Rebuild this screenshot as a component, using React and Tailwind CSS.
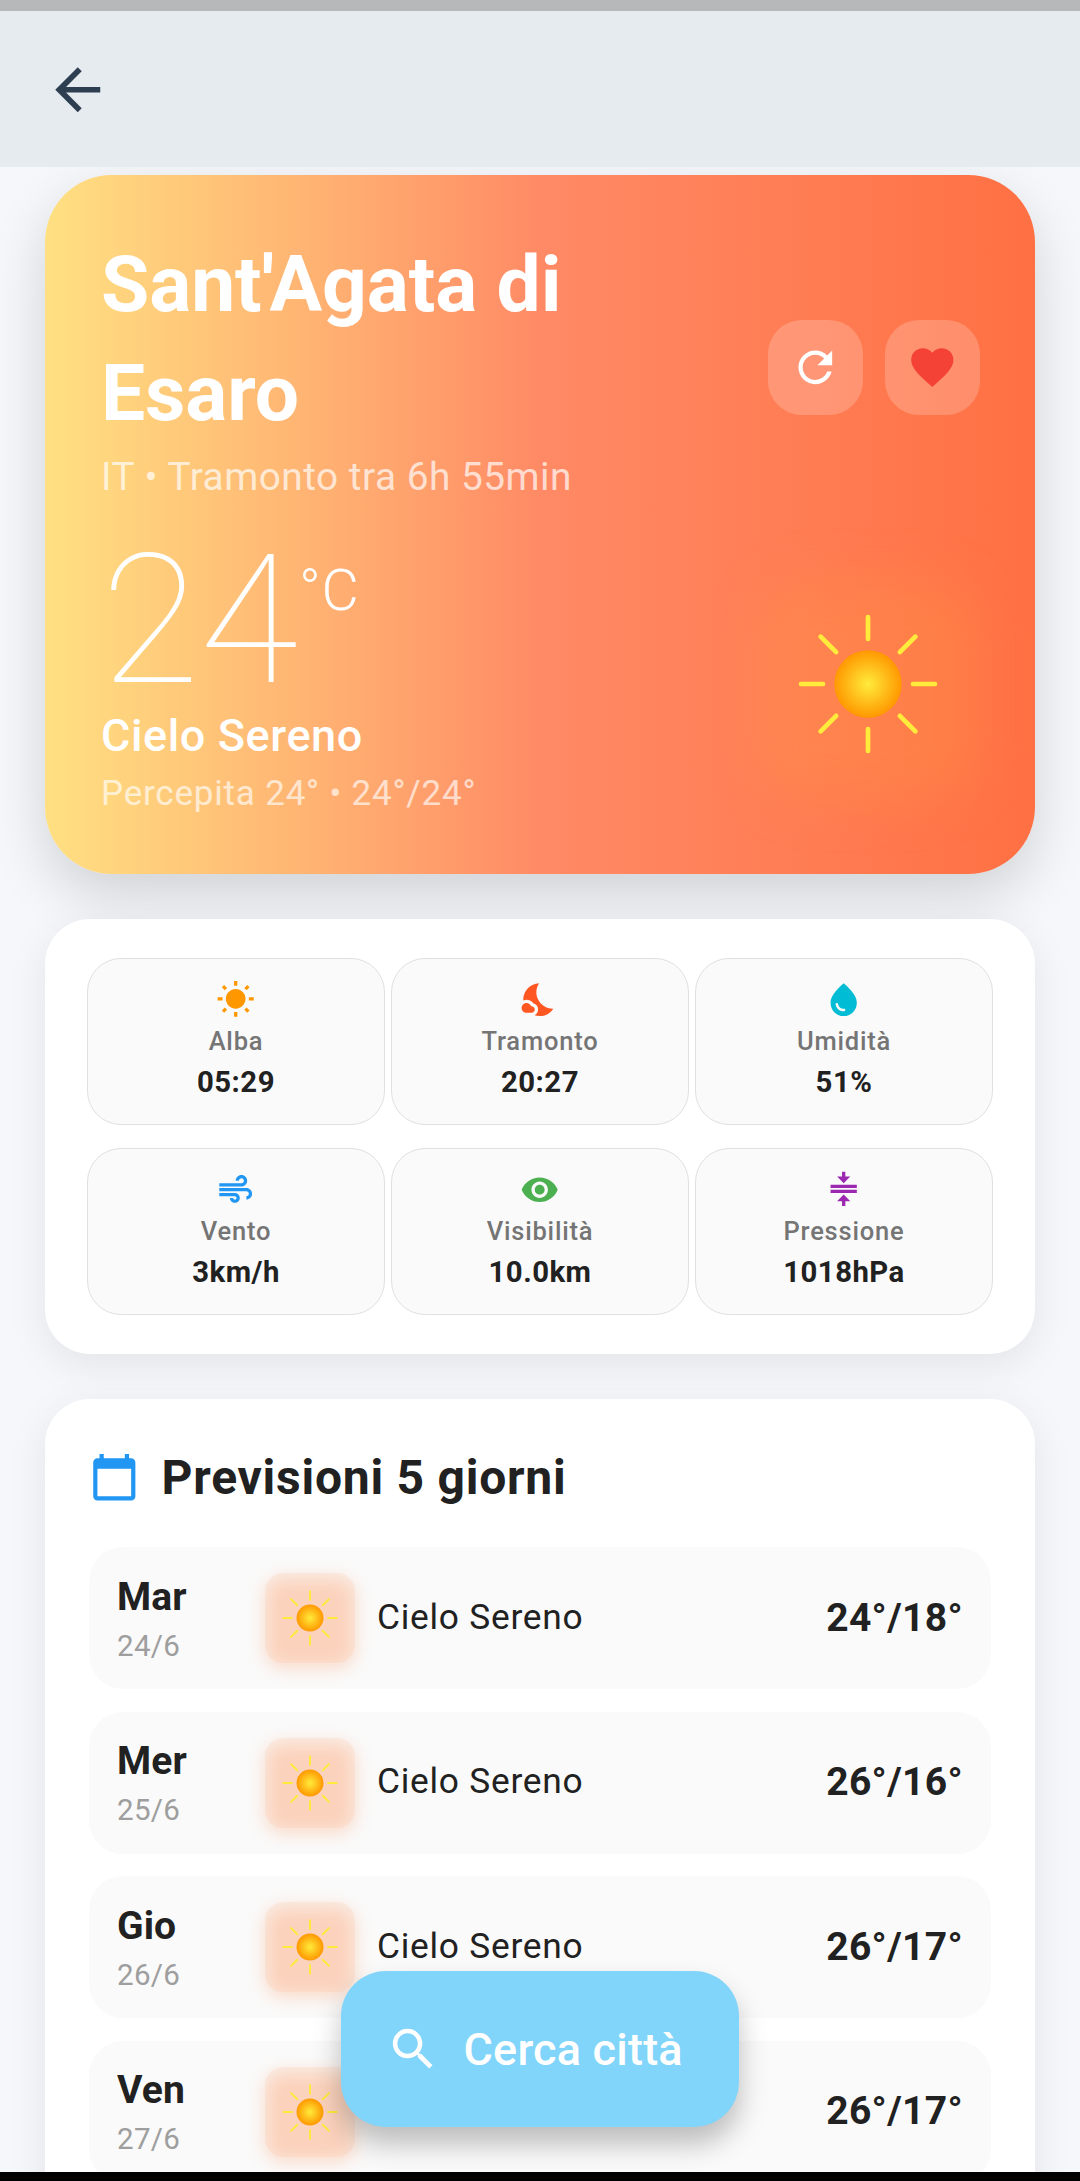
import { MdArrowBack, MdRefresh, MdFavorite, MdWbSunny, MdNightsStay, MdWaterDrop, MdAir, MdVisibility, MdCompress, MdCalendarToday, MdSearch } from "react-icons/md";

const RAYS = [0, 45, 90, 135, 180, 225, 270, 315];

function Sun({ className, id }) {
  return (
    <svg viewBox="-75 -75 150 150" className={className}>
      <defs>
        <radialGradient id={id}>
          <stop offset="0" stopColor="#FFEB3B" />
          <stop offset="1" stopColor="#FF9800" />
        </radialGradient>
      </defs>
      {RAYS.map((a) => (
        <line key={a} x1="45" y1="0" x2="67" y2="0" stroke="#FFEB3B" strokeWidth="4.7" strokeLinecap="round" transform={`rotate(${a})`} />
      ))}
      <circle r="33.7" fill={`url(#${id})`} />
    </svg>
  );
}

const STATS = [
  { icon: MdWbSunny, color: "text-[#FF9800]", label: "Alba", value: "05:29" },
  { icon: MdNightsStay, color: "text-[#FF5722]", label: "Tramonto", value: "20:27" },
  { icon: MdWaterDrop, color: "text-[#00BCD4]", label: "Umidità", value: "51%" },
  { icon: MdAir, color: "text-[#2196F3]", label: "Vento", value: "3km/h" },
  { icon: MdVisibility, color: "text-[#4CAF50]", label: "Visibilità", value: "10.0km" },
  { icon: MdCompress, color: "text-[#9C27B0]", label: "Pressione", value: "1018hPa" },
];

const DAYS = [
  { day: "Mar", date: "24/6", temp: "24°/18°" },
  { day: "Mer", date: "25/6", temp: "26°/16°" },
  { day: "Gio", date: "26/6", temp: "26°/17°" },
  { day: "Ven", date: "27/6", temp: "26°/17°" },
];

function Hero() {
  return (
    <section className="flex h-[699px] shrink-0 flex-col rounded-[67px] bg-linear-to-r from-[#FFE082] via-[#FF8A65] to-[#FF7043] pt-[55px] pr-[55px] pl-[56px] text-white shadow-[0_22px_56px_rgba(0,0,0,0.15)]">
      <div className="flex items-center justify-between">
        <div>
          <h1 className="w-[560px] text-[78.5px] leading-[109px] font-bold tracking-[-0.1px]">Sant'Agata di<br />Esaro</h1>
          <p className="text-[38.8px] leading-[57px] tracking-[0.5px] text-white/70">IT • Tramonto tra 6h 55min</p>
        </div>
        <div className="flex gap-[22px]">
          <button className="grid size-[95px] place-items-center rounded-[34px] bg-white/20"><MdRefresh className="size-[50.6px]" /></button>
          <button className="grid size-[95px] place-items-center rounded-[34px] bg-white/20"><MdFavorite className="size-[50.6px] text-[#F44336]" /></button>
        </div>
      </div>
      <div className="mt-[29px] flex items-center justify-between">
        <div>
          <div className="flex items-start">
            <span className="text-[180px] leading-[174px] font-thin">24</span>
            <span className="mt-[24px] ml-px text-[57.5px] leading-[66px] font-light tracking-[0.6px]">°C</span>
          </div>
          <p className="text-[45px] leading-[56px] font-medium tracking-[0.6px]">Cielo Sereno</p>
          <p className="mt-[5px] text-[35px] leading-[49px] tracking-[0.8px] text-white/65">Percepita 24° • 24°/24°</p>
        </div>
        <div className="relative mt-[16px] grid size-[225px] place-items-center">
          <div className="absolute inset-0 translate-y-[6px] rounded-[56px] bg-[#FFA040]/22 blur-[24px]" />
          <Sun id="sun-hero" className="relative size-[150px]" />
        </div>
      </div>
    </section>
  );
}

export default function App() {
  return (
    <div className="relative flex h-[2181px] w-[1080px] flex-col overflow-hidden bg-[#F5F7FB] font-['Roboto',sans-serif] text-[#212121]">
      <div className="h-[11px] shrink-0 bg-[#B7B8BA]" />
      <header className="flex h-[156px] shrink-0 items-center bg-[#E6EBEF] pt-[1px] pl-[44px]">
        <MdArrowBack className="size-[67.5px] text-[#2C3E50]" />
      </header>
      <main className="flex flex-1 flex-col overflow-hidden px-[45px] pt-[8px]">
        <Hero />
        <section className="mt-[45px] grid h-[435px] shrink-0 grid-cols-3 gap-x-[6px] gap-y-[23px] rounded-[45px] bg-white px-[42px] py-[39px] shadow-[0_11px_42px_rgba(0,0,0,0.08)]">
          {STATS.map(({ icon: Icon, color, label, value }) => (
            <div key={label} className="flex flex-col items-center rounded-[34px] border border-[#E0E0E0] bg-[#FAFAFA] pt-[20.5px]">
              <Icon className={`size-[39.4px] ${color}`} />
              <span className="mt-[4.5px] text-[25.5px] leading-[36px] font-medium tracking-[0.8px] text-[#757575]">{label}</span>
              <span className="mt-[3px] text-[29.3px] leading-[40px] font-bold tracking-[0.5px]">{value}</span>
            </div>
          ))}
        </section>
        <section className="mt-[45px] flex h-[900px] shrink-0 flex-col rounded-[45px] bg-white px-[44px] pt-[45px] shadow-[0_11px_42px_rgba(0,0,0,0.08)]">
          <div className="flex h-[67px] items-center">
            <MdCalendarToday className="size-[50.6px] text-[#2196F3]" />
            <h2 className="ml-[22px] text-[48px] leading-[66px] font-bold tracking-[0.75px]">Previsioni 5 giorni</h2>
          </div>
          <ul className="mt-[36px] flex flex-col gap-[22.5px]">
            {DAYS.map(({ day, date, temp }) => (
              <li key={day} className="flex h-[142px] shrink-0 items-center rounded-[34px] bg-[#FAFAFA] px-[28px]">
                <div className="w-[148px] pt-[1px]">
                  <p className="text-[39px] leading-[55px] font-bold tracking-[0.1px]">{day}</p>
                  <p className="text-[29.5px] leading-[43px] tracking-[0.3px] text-[#9E9E9E]">{date}</p>
                </div>
                <div className="relative grid size-[90px] place-items-center">
                  <div className="absolute inset-0 translate-y-[5px] rounded-[18px] bg-[#FF8040]/27 blur-[9px]" />
                  <div className="absolute inset-0 rounded-[18px] bg-[#FFA060]/10" />
                  <Sun id={`sun-${day}`} className="relative size-[60px]" />
                </div>
                <p className="relative -top-px ml-[22px] text-[35.3px] tracking-[0.75px]">Cielo Sereno</p>
                <p className="ml-auto text-[39px] font-bold tracking-[0.35px]">{temp}</p>
              </li>
            ))}
          </ul>
        </section>
      </main>
      <div className="h-[9px] shrink-0 bg-black" />
      <button className="absolute top-[1971px] left-[341px] flex h-[156px] w-[398px] items-center rounded-[45px] bg-[#81D4FA] pt-[1px] pl-[45px] text-white shadow-[0_17px_28px_rgba(0,0,0,0.25)]">
        <MdSearch className="size-[54.5px]" />
        <span className="ml-[23px] text-[45px] font-medium tracking-[0.2px]">Cerca città</span>
      </button>
    </div>
  );
}
